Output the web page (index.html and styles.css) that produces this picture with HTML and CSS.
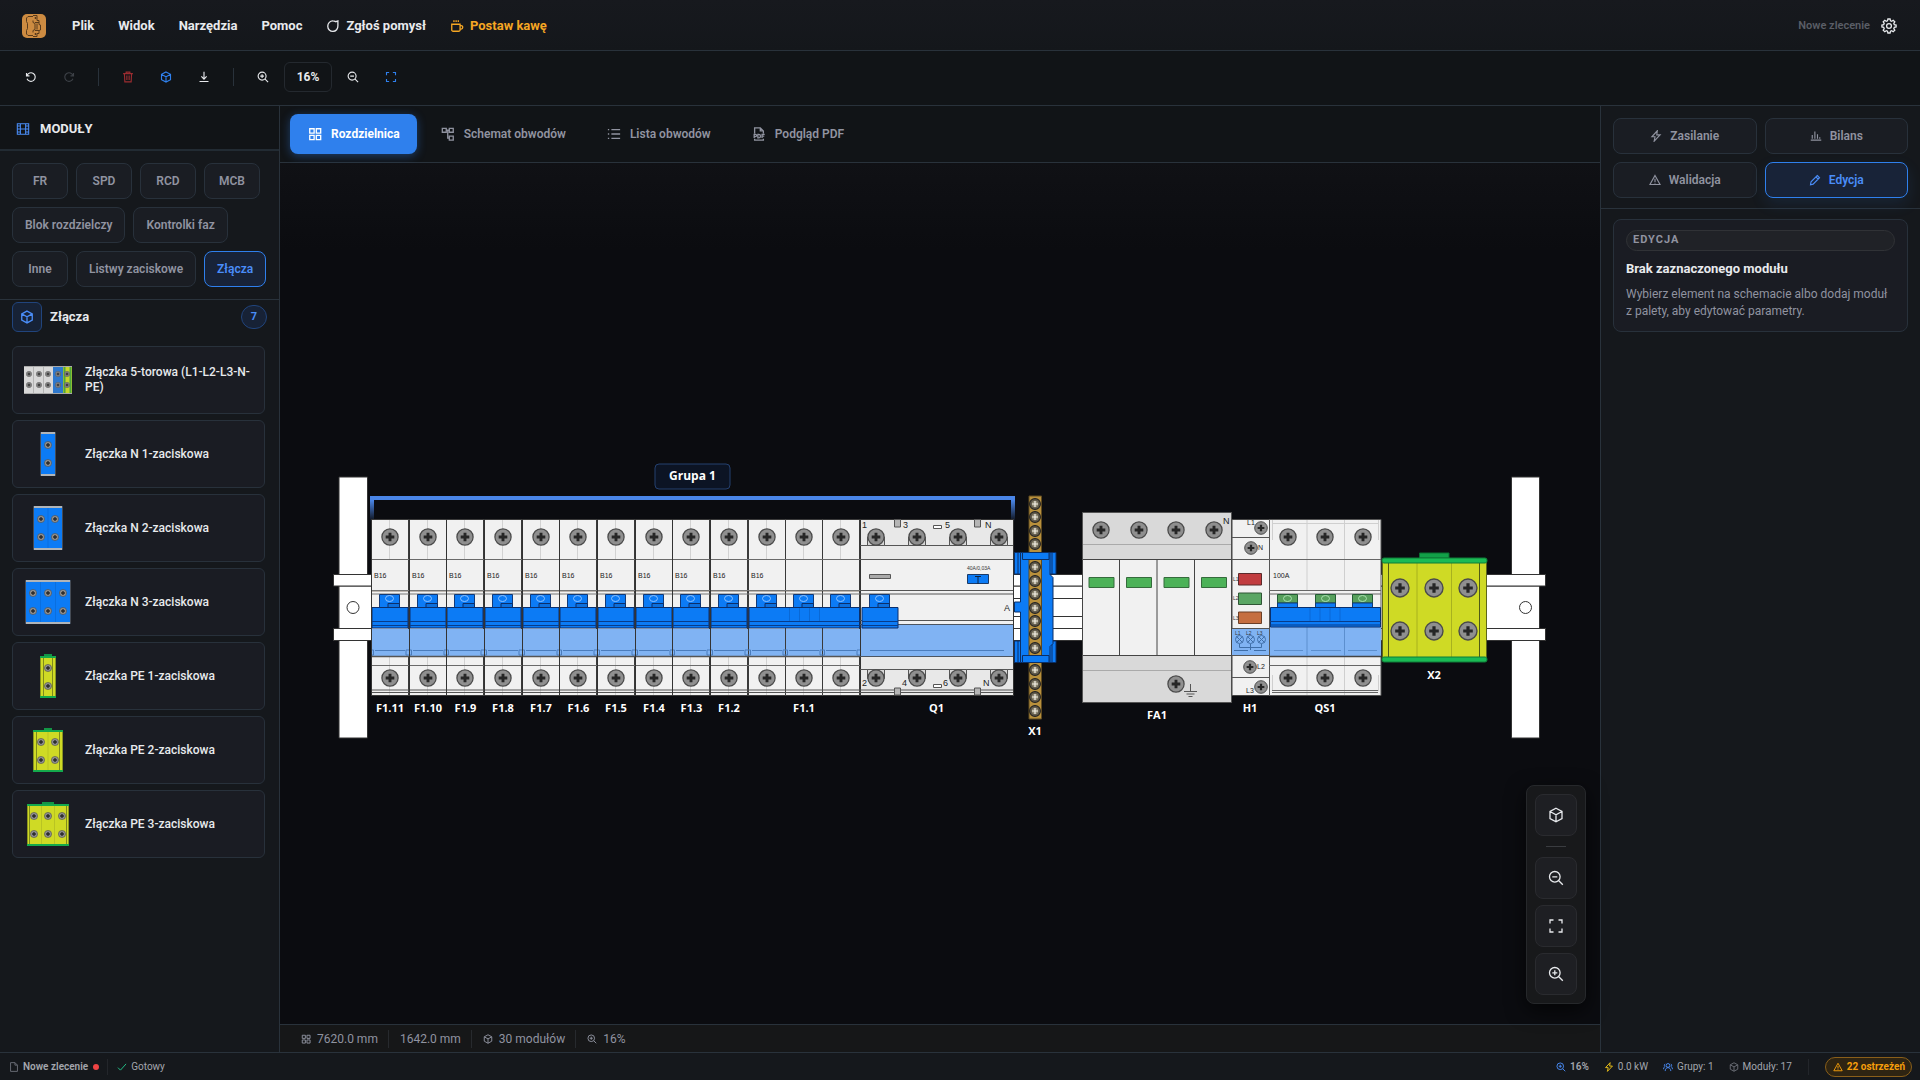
FILE: index.html
```html
<!DOCTYPE html>
<html lang="pl">
<head>
<meta charset="utf-8">
<meta name="viewport" content="width=device-width, initial-scale=1">
<title>Rozdzielnica – Nowe zlecenie</title>
<link rel="stylesheet" href="styles.css">
</head>
<body>
<svg class="defs" aria-hidden="true">
  <defs>
    <symbol id="i-bubble" viewBox="0 0 16 16"><path d="M13.6 2.2v5.6A5.8 6 0 1 1 8 2.2c1.200 0 2.300.5 3.200.9z"/></symbol>
    <symbol id="i-coffee" viewBox="0 0 16 16"><path d="M2 6h9.500v6.500a1.500 1.500 0 0 1-1.500 1.500H3.500A1.500 1.500 0 0 1 2 12.500zM11.500 7.500h1.300a1.700 1.700 0 0 1 1.700 1.700v.6a1.700 1.700 0 0 1-1.700 1.700h-1.300M4.500 1.500v2M7 1.500v2M9.500 1.500v2"/></symbol>
    <symbol id="i-undo" viewBox="0 0 16 16"><path d="M2 2.500v4h4M2.500 6.300A5.700 5.700 0 1 1 2.700 10.300"/></symbol>
    <symbol id="i-redo" viewBox="0 0 16 16"><path d="M14 2.500v4h-4M13.500 6.300A5.700 5.700 0 1 0 13.300 10.300"/></symbol>
    <symbol id="i-trash" viewBox="0 0 16 16"><path d="M1.500 3.500h13M5.500 3.500v-2h5v2M3.200 3.500l.6 11h8.400l.6-11M6.500 6v6M9.500 6v6"/></symbol>
    <symbol id="i-cube" viewBox="0 0 16 16"><path d="M8 1.200l6 3.300v7L8 14.800l-6-3.300v-7zM2 4.500l6 3.300 6-3.300M8 7.800v7"/></symbol>
    <symbol id="i-down" viewBox="0 0 16 16"><path d="M8 1v9.500M4.500 7.300L8 10.800l3.500-3.500M2 14h12"/></symbol>
    <symbol id="i-zin" viewBox="0 0 16 16"><circle cx="6.800" cy="6.800" r="5.300"/><path d="M10.800 10.800l4 4M6.800 4.300v5M4.300 6.800h5"/></symbol>
    <symbol id="i-zout" viewBox="0 0 16 16"><circle cx="6.800" cy="6.800" r="5.300"/><path d="M10.800 10.800l4 4M4.300 6.800h5"/></symbol>
    <symbol id="i-fit" viewBox="0 0 16 16"><path d="M2 5.500V2h3.500M10.500 2H14v3.500M14 10.500V14h-3.500M5.500 14H2v-3.500"/></symbol>
    <symbol id="i-table" viewBox="0 0 16 16"><path d="M1.500 2h13v12h-13zM1.500 8h13M5 2v12M11 2v12M1.500 4.500H5M11 4.500h3.500M1.500 11.500H5M11 11.500h3.500"/></symbol>
    <symbol id="i-grid" viewBox="0 0 16 16"><path d="M2 2h5v5H2zM9.500 2h5v5h-5zM2 9.500h5v5H2zM9.500 9.500h5v5h-5z"/></symbol>
    <symbol id="i-flow" viewBox="0 0 16 16"><path d="M1.500 1.500h4.500V6H1.500zM9.500 1.500H14V6H9.500zM9.500 10.500H14V15H9.500zM6 3.700h3.500M7.700 3.700v9h1.800"/></symbol>
    <symbol id="i-list" viewBox="0 0 16 16"><path d="M1 3h1.500M1 8h1.500M1 13h1.500M5 3h10M5 8h10M5 13h10"/></symbol>
    <symbol id="i-pdf" viewBox="0 0 16 16"><path d="M3 7.500V1h6.500L13 4.500v3M9.500 1v3.500H13M3 13.500V15h10v-1.500M2.500 12.500v-4H4a1.200 1.200 0 0 1 0 2.400H2.500M6.700 8.500v4h1a2 2 0 0 0 0-4zM14.500 8.500H11.500v4M11.500 10.500h2.500"/></symbol>
    <symbol id="i-bolt" viewBox="0 0 16 16"><path d="M9.800 1L2.500 9h4.200L5.500 15l8-8.500H9z"/></symbol>
    <symbol id="i-bars" viewBox="0 0 16 16"><path d="M1 13.500h14M3 11.500v-5M6.500 11.500V2M10 11.500v-6M13 11.500v-2"/></symbol>
    <symbol id="i-warn" viewBox="0 0 16 16"><path d="M8 2l6.700 12H1.300zM8 6.300v4.200M8 11.700v1"/></symbol>
    <symbol id="i-pen" viewBox="0 0 16 16"><path d="M11 2l3 3-8.500 8.500L2 14.300l.7-3.800zM9.200 3.800l3 3"/></symbol>
    <symbol id="i-gear" viewBox="0 0 16 16"><circle cx="8" cy="8" r="2.400"/><path d="M6.900 1h2.200l.4 1.800 1.200.5 1.500-1 1.600 1.600-1 1.500.5 1.200 1.800.4v2l-1.800.4-.5 1.200 1 1.500-1.600 1.600-1.500-1-1.200.5L9.100 15H6.900l-.4-1.800-1.200-.5-1.500 1-1.600-1.600 1-1.500-.5-1.200L.9 9V7l1.800-.4.5-1.200-1-1.500 1.600-1.600 1.500 1 1.200-.5z"/></symbol>
    <symbol id="i-file" viewBox="0 0 16 16"><path d="M2.500 1h7l4 4v10h-11zM9.500 1v4h4"/></symbol>
    <symbol id="i-check" viewBox="0 0 16 16"><path d="M1.500 9l4 4L14.500 3"/></symbol>
    <symbol id="i-group" viewBox="0 0 16 16"><circle cx="8" cy="5.500" r="3"/><path d="M3.500 14.500c0-3.500 2-5.500 4.500-5.500s4.500 2 4.500 5.500M3.500 3C1.800 4 1.800 6.500 3 7.500 1.500 8.500.8 10 .8 11.500M12.500 3c1.700 1 1.700 3.500.5 4.500 1.500 1 2.200 2.500 2.200 4"/></symbol>

    <symbol id="screw" viewBox="-10 -10 20 20"><circle r="9" fill="#8f8f8f" stroke="#4b4b4b" stroke-width="1.400"/><path d="M0-4.800V4.800M-4.800 0H4.800" stroke="#262626" stroke-width="3.200"/></symbol>
    <symbol id="brass-screw" viewBox="-10 -10 20 20"><circle r="9" fill="#6b6353" stroke="#222" stroke-width="1.800"/><circle r="6.500" fill="#8f8874" stroke="#3a362c"/><path d="M0-5V5M-5 0H5" stroke="#f4f1e6" stroke-width="2"/></symbol>

    <g id="toggle"><path d="M8.500 75.500h20V89h-20z" fill="#0c7bf5" stroke="#123a78"/><ellipse cx="18.500" cy="79.500" rx="4" ry="3" fill="none" stroke="#8fc2ff"/><path d="M17 84.500h11.500V89H17z" fill="#0c6fdd" stroke="#0b2f6b"/></g>
    <g id="pole">
      <path d="M.5.500h37v176H.5z" fill="#f1f1f1" stroke="#3a3a3a"/>
      <path d="M18.500 1v39M18.500 138v38" stroke="#d2d2d2"/>
      <path d="M0 40.500h38M0 146.500h38" stroke="#6a6a6a"/>
      <path d="M0 71.500h38M0 75h38" stroke="#777"/>
      <path d="M1 72.500h36" stroke="#bcb6b0"/>
      <path d="M1 110h37v27H1z" fill="#80b3f3"/>
      <path d="M4 131.500h30M0 131h2.500v5H0M38 131h-3v5h3" stroke="#4b7dbd" fill="none"/>
      <path d="M0 137.500h38" stroke="#555" stroke-width="1.500"/>
      <path d="M0 171h38M0 173.500h38" stroke="#555"/>
      <use href="#toggle"/>
      <use href="#screw" x="10" y="9" width="18" height="18"/>
      <use href="#screw" x="10" y="150" width="18" height="18"/>
    </g>
    <g id="handle"><path d="M1 88.500h36V109H1z" fill="#0c7bf5" stroke="#0a2f6c"/><path d="M1 102.500h36M1 106.500h36" stroke="#083c8a"/></g>
    <g id="mcb"><use href="#pole"/><use href="#handle"/><path d="M.5 0v177" stroke="#333"/><text x="3" y="59" class="tiny-text">B16</text></g>
    <g id="green-toggle"><path d="M8.500 75.500h20V84h-20z" fill="#57a05c" stroke="#245c35"/><path d="M8.500 84h20v5h-20z" fill="#0c7bf5" stroke="#123a78"/><ellipse cx="18.500" cy="79.500" rx="4" ry="3" fill="none" stroke="#a8e0b0"/></g>

    <linearGradient id="fade" x1="0" y1="0" x2="0" y2="1"><stop offset="0" stop-color="#4a86e8"/><stop offset="1" stop-color="#4a86e8" stop-opacity="0"/></linearGradient>
  </defs>
</svg>

<div class="app">
  <header class="topbar">
    <svg class="logo" viewBox="0 0 24 24" role="img" aria-label="Logo"><rect width="24" height="24" rx="5" fill="#cd8b41"/><path d="M11 2.500H6L4.500 4v3.500l1 2v5l-1 2V20L6 21.500h5M11 1.500h4v5h2v4l1.500.5v5l-1.500.5v3h-2v3h-4M13 3.500h1v1h-1zM13 19.500h1v1h-1zM11 6.500v2l2 1v6l-2 1v2M15 9.500v6M13 8.500h4M13 16.500h4" fill="none" stroke="#593b1c"/></svg>
    <nav class="menu" aria-label="Menu główne">
      <button type="button">Plik</button>
      <button type="button">Widok</button>
      <button type="button">Narzędzia</button>
      <button type="button">Pomoc</button>
      <button type="button"><svg class="icon s14"><use href="#i-bubble"/></svg>Zgłoś pomysł</button>
      <button type="button" class="coffee"><svg class="icon s14"><use href="#i-coffee"/></svg>Postaw kawę</button>
    </nav>
    <span class="doc-name">Nowe zlecenie</span>
    <button type="button" class="gear" aria-label="Ustawienia"><svg class="icon s16"><use href="#i-gear"/></svg></button>
  </header>

  <div class="toolbar" role="toolbar" aria-label="Narzędzia">
    <button type="button" aria-label="Cofnij"><svg class="icon s12"><use href="#i-undo"/></svg></button>
    <button type="button" aria-label="Ponów" disabled><svg class="icon s12"><use href="#i-redo"/></svg></button>
    <span class="sep"></span>
    <button type="button" class="danger" aria-label="Usuń"><svg class="icon s12"><use href="#i-trash"/></svg></button>
    <button type="button" class="accent" aria-label="Widok 3D"><svg class="icon s12"><use href="#i-cube"/></svg></button>
    <button type="button" aria-label="Pobierz"><svg class="icon s12"><use href="#i-down"/></svg></button>
    <span class="sep"></span>
    <button type="button" aria-label="Powiększ"><svg class="icon s12"><use href="#i-zin"/></svg></button>
    <button type="button" class="zoom-value">16%</button>
    <button type="button" aria-label="Pomniejsz"><svg class="icon s12"><use href="#i-zout"/></svg></button>
    <button type="button" class="accent" aria-label="Dopasuj"><svg class="icon s12"><use href="#i-fit"/></svg></button>
  </div>

  <main class="workspace">
    <aside class="palette">
      <h2 class="palette-title"><svg class="icon s14"><use href="#i-table"/></svg>MODUŁY</h2>
      <div class="categories">
        <button type="button">FR</button>
        <button type="button">SPD</button>
        <button type="button">RCD</button>
        <button type="button">MCB</button>
        <button type="button">Blok rozdzielczy</button>
        <button type="button">Kontrolki faz</button>
        <button type="button">Inne</button>
        <button type="button">Listwy zaciskowe</button>
        <button type="button" class="active">Złącza</button>
      </div>
      <div class="group-head">
        <span class="group-icon"><svg class="icon s14"><use href="#i-cube"/></svg></span>
        <h3>Złącza</h3>
        <span class="count">7</span>
      </div>
      <ul class="modules">
        <li><button type="button">
          <svg class="thumb" viewBox="0 0 48 44"><path d="M0 8h48v28H0z" fill="#d8d8d8"/><path d="M29 9h10v26H29z" fill="#2f78cc"/><path d="M39 9h9v26h-9z" fill="#c6d42a"/><path d="M40.500 9v26M46.500 9v26" stroke="#4fa63c" stroke-width="2"/><path d="M9.500 9v26M19.500 9v26" stroke="#b4b4b4"/><path d="M0 8.500h48M0 35.500h48" stroke="#a9a9a9"/><g><use href="#screw" x="2" y="13" width="6" height="6"/><use href="#screw" x="12" y="13" width="6" height="6"/><use href="#screw" x="21" y="13" width="6" height="6"/><use href="#screw" x="31" y="13" width="6" height="6"/><use href="#screw" x="40" y="13" width="6" height="6"/><use href="#screw" x="2" y="24" width="6" height="6"/><use href="#screw" x="12" y="24" width="6" height="6"/><use href="#screw" x="21" y="24" width="6" height="6"/><use href="#screw" x="31" y="24" width="6" height="6"/><use href="#screw" x="40" y="24" width="6" height="6"/></g></svg>
          <span>Złączka 5-torowa (L1-L2-L3-N-PE)</span></button></li>
        <li><button type="button">
          <svg class="thumb" viewBox="0 0 48 44"><path d="M16.500.500h15v43h-15z" fill="#0c7bf5" stroke="#454b55"/><path d="M17 1h14M17 43h14" stroke="#b0b4b8" stroke-width="2"/><use href="#screw" x="20" y="9" width="8" height="8"/><use href="#screw" x="20" y="27" width="8" height="8"/></svg>
          <span>Złączka N 1-zaciskowa</span></button></li>
        <li><button type="button">
          <svg class="thumb" viewBox="0 0 48 44"><path d="M9.500.500h29v43h-29z" fill="#0c7bf5" stroke="#454b55"/><path d="M10 1h28M10 43h28" stroke="#b0b4b8" stroke-width="2"/><path d="M24 2v40" stroke="#0a6fdf"/><use href="#screw" x="13" y="9" width="8" height="8"/><use href="#screw" x="27" y="9" width="8" height="8"/><use href="#screw" x="13" y="27" width="8" height="8"/><use href="#screw" x="27" y="27" width="8" height="8"/></svg>
          <span>Złączka N 2-zaciskowa</span></button></li>
        <li><button type="button">
          <svg class="thumb" viewBox="0 0 48 44"><path d="M1.500.500h45v43h-45z" fill="#0c7bf5" stroke="#454b55"/><path d="M2 1h44M2 43h44" stroke="#b0b4b8" stroke-width="2"/><path d="M16.500 2v40M31.500 2v40" stroke="#0a6fdf"/><use href="#screw" x="5" y="9" width="8" height="8"/><use href="#screw" x="20" y="9" width="8" height="8"/><use href="#screw" x="35" y="9" width="8" height="8"/><use href="#screw" x="5" y="27" width="8" height="8"/><use href="#screw" x="20" y="27" width="8" height="8"/><use href="#screw" x="35" y="27" width="8" height="8"/></svg>
          <span>Złączka N 3-zaciskowa</span></button></li>
        <li><button type="button">
          <svg class="thumb" viewBox="0 0 48 44"><path d="M20 0h8v3h-8z" fill="#129545"/><path d="M16.500 3h15v40h-15z" fill="#cfda25" stroke="#8a9420"/><path d="M19.500 4v38M28.500 4v38" stroke="#7f8a1c"/><path d="M16 3h16M16 43h16" stroke="#14a94c" stroke-width="2"/><use href="#screw" x="20" y="10" width="8" height="8"/><use href="#screw" x="20" y="28" width="8" height="8"/></svg>
          <span>Złączka PE 1-zaciskowa</span></button></li>
        <li><button type="button">
          <svg class="thumb" viewBox="0 0 48 44"><path d="M20 0h8v3h-8z" fill="#129545"/><path d="M9.500 3h29v40h-29z" fill="#cfda25" stroke="#8a9420"/><path d="M12.500 4v38M35.500 4v38" stroke="#7f8a1c"/><path d="M24 4v38" stroke="#b9c423"/><path d="M9 3h30M9 43h30" stroke="#14a94c" stroke-width="2"/><use href="#screw" x="13" y="10" width="8" height="8"/><use href="#screw" x="27" y="10" width="8" height="8"/><use href="#screw" x="13" y="28" width="8" height="8"/><use href="#screw" x="27" y="28" width="8" height="8"/></svg>
          <span>Złączka PE 2-zaciskowa</span></button></li>
        <li><button type="button">
          <svg class="thumb" viewBox="0 0 48 44"><path d="M18 0h12v3H18z" fill="#129545"/><path d="M3.500 3h41v40h-41z" fill="#cfda25" stroke="#8a9420"/><path d="M5.500 4v38M42.500 4v38" stroke="#7f8a1c"/><path d="M17.500 4v38M30.500 4v38" stroke="#b9c423"/><path d="M3 3h42M3 43h42" stroke="#14a94c" stroke-width="2"/><use href="#screw" x="6" y="10" width="8" height="8"/><use href="#screw" x="20" y="10" width="8" height="8"/><use href="#screw" x="34" y="10" width="8" height="8"/><use href="#screw" x="6" y="28" width="8" height="8"/><use href="#screw" x="20" y="28" width="8" height="8"/><use href="#screw" x="34" y="28" width="8" height="8"/></svg>
          <span>Złączka PE 3-zaciskowa</span></button></li>
      </ul>
    </aside>

    <section class="center">
      <div class="tabs" role="tablist">
        <button type="button" role="tab" aria-selected="true" class="active"><svg class="icon s14"><use href="#i-grid"/></svg>Rozdzielnica</button>
        <button type="button" role="tab"><svg class="icon s14"><use href="#i-flow"/></svg>Schemat obwodów</button>
        <button type="button" role="tab"><svg class="icon s14"><use href="#i-list"/></svg>Lista obwodów</button>
        <button type="button" role="tab"><svg class="icon s14"><use href="#i-pdf"/></svg>Podgląd PDF</button>
      </div>

      <div class="canvas">
        <svg class="drawing" viewBox="280 163 1320 861" role="img" aria-label="Rozdzielnica">
          <!-- DIN rail and side posts -->
          <g fill="#fff" stroke="#333">
            <path d="M339 477h28.500v261H339zM1511.500 477h28v261h-28z"/>
            <path d="M339 586h1200.500v42.500H339z"/>
            <path d="M333.500 574.500h1212V586h-1212zM333.500 628.500h1212V640.500h-1212z"/>
            <path d="M1014 598.500h70M1014 616.500h70"/>
            <circle cx="353" cy="607.500" r="6"/><circle cx="1525.500" cy="607.500" r="6"/>
          </g>

          <!-- Group bracket -->
          <path d="M370 496h645v4H370z" fill="#4a86e8"/>
          <path d="M370 500h4v22h-4zM1011 500h4v22h-4z" fill="url(#fade)"/>
          <rect x="655" y="464" width="75" height="25" rx="4" fill="#0c1424" stroke="#24406f"/>
          <text x="692.500" y="480" class="group-text">Grupa 1</text>

          <!-- F1.11 … F1.2 -->
          <use href="#mcb" x="371" y="519"/><use href="#mcb" x="409" y="519"/><use href="#mcb" x="446" y="519"/><use href="#mcb" x="484" y="519"/><use href="#mcb" x="522" y="519"/><use href="#mcb" x="559" y="519"/><use href="#mcb" x="597" y="519"/><use href="#mcb" x="635" y="519"/><use href="#mcb" x="672" y="519"/><use href="#mcb" x="710" y="519"/>

          <!-- F1.1 -->
          <use href="#pole" x="748" y="519"/><use href="#pole" x="785" y="519"/><use href="#pole" x="822" y="519"/>
          <text x="751" y="578" class="tiny-text">B16</text>
          <path d="M749 607.500h110.500V628H749z" fill="#0c7bf5" stroke="#0a2f6c"/>
          <path d="M749 621.500h110.500M749 625.500h110.500" stroke="#083c8a"/>
          <path d="M789.500 608v13M799.500 608v13M809.500 608v13M819.500 608v13" stroke="#0a69d6"/>

          <!-- Q1 -->
          <g transform="translate(860 519)">
            <path d="M.5.500h153v176H.5z" fill="#f1f1f1" stroke="#333"/>
            <path d="M1 1h152v39.500H1zM1 138h152v38H1z" fill="#e8e8e8"/>
            <path d="M0 26.500h153M0 40.500h153M0 71.500h153M0 75h153M0 101.500h153M0 150.500h153M0 171h153M0 173.500h153" stroke="#555"/>
            <path d="M1 105h152v32H1z" fill="#80b3f3"/>
            <path d="M0 105.500h153M0 137.500h153" stroke="#4c5561"/><path d="M10 131.500h134" stroke="#4b7dbd"/>
            <g fill="#d6d6d6" stroke="#555"><path d="M7.500 18h17v8.500h-17zM48.500 18h17v8.500h-17zM89.500 18h17v8.500h-17zM130.500 18h17v8.500h-17zM7.500 150.500h17v9h-17zM48.500 150.500h17v9h-17zM89.500 150.500h17v9h-17zM130.500 150.500h17v9h-17z"/><path d="M34.500.500h6V8h-6zM114.500.500h6V8h-6zM34.500 169h6v7h-6zM114.500 169h6v7h-6z" fill="#b5b5b5"/><path d="M73.500 6.500h8v3h-8zM73.500 165.500h8v3h-8z" fill="#fff"/><path d="M9.500 55.500h21v4h-21z" fill="#aaa"/></g>
            <use href="#screw" x="7" y="9" width="18" height="18"/><use href="#screw" x="48" y="9" width="18" height="18"/><use href="#screw" x="89" y="9" width="18" height="18"/><use href="#screw" x="130" y="9" width="18" height="18"/>
            <use href="#screw" x="7" y="150" width="18" height="18"/><use href="#screw" x="48" y="150" width="18" height="18"/><use href="#screw" x="89" y="150" width="18" height="18"/><use href="#screw" x="130" y="150" width="18" height="18"/>
            <g class="mark-text"><text x="2" y="9">1</text><text x="43" y="9">3</text><text x="85" y="9">5</text><text x="125" y="9">N</text><text x="2" y="167">2</text><text x="42" y="167">4</text><text x="83" y="167">6</text><text x="123" y="167">N</text><text x="144" y="92">A</text></g>
            <text x="107" y="51" class="micro-text">40A/0,03A</text>
            <path d="M107.500 55.500h21v9h-21z" fill="#0c7bf5" stroke="#1b3a66"/><path d="M115 57.500h6M118 57.500V65" stroke="#10243f"/>
            <use href="#toggle" x="1"/><use href="#handle" x="1"/>
          </g>

          <!-- X1 -->
          <g fill="#0c7bf5" stroke="#0b2f66">
            <path d="M1014.500 552.500h41.500V574h-41.500zM1014.500 641h41.500v21.500h-41.500z"/>
            <path d="M1018 552v22M1052 552v22M1018 641v21M1052 641v21"/>
            <path d="M1020.500 552.500h29.500v22l3 3v66l-3 3v16h-29.500v-50.500h-6v-10h6z"/>
          </g>
          <path d="M1029 496h12.500v223H1029z" fill="#b8903c" stroke="#5e4a20"/>
          <path d="M1022.500 552.500h26.500v7h-26.500zM1022.500 655.500h26.500v7h-26.500z" fill="#0c7bf5" stroke="#0b2f66"/>
          <g>
            <use href="#brass-screw" x="1029" y="498" width="12" height="12"/><use href="#brass-screw" x="1029" y="511" width="12" height="12"/><use href="#brass-screw" x="1029" y="525" width="12" height="12"/><use href="#brass-screw" x="1029" y="538" width="12" height="12"/>
            <use href="#brass-screw" x="1029" y="561" width="12" height="12"/><use href="#brass-screw" x="1029" y="575" width="12" height="12"/><use href="#brass-screw" x="1029" y="588" width="12" height="12"/><use href="#brass-screw" x="1029" y="602" width="12" height="12"/><use href="#brass-screw" x="1029" y="615" width="12" height="12"/><use href="#brass-screw" x="1029" y="628" width="12" height="12"/><use href="#brass-screw" x="1029" y="642" width="12" height="12"/>
            <use href="#brass-screw" x="1029" y="664" width="12" height="12"/><use href="#brass-screw" x="1029" y="678" width="12" height="12"/><use href="#brass-screw" x="1029" y="691" width="12" height="12"/><use href="#brass-screw" x="1029" y="705" width="12" height="12"/>
          </g>

          <!-- FA1 -->
          <path d="M1082.500 512.500h149v190h-149z" fill="#d9d9d9" stroke="#555"/>
          <path d="M1083 544.500h148M1083 670.500h148" stroke="#aaa"/>
          <path d="M1082.500 559.500h149v96h-149zM1119.500 560v95M1157 560v95M1194.500 560v95" fill="#f1f1f1" stroke="#444"/>
          <g fill="#4cb258" stroke="#356b3c"><path d="M1089 577.500h25v10h-25zM1126.500 577.500h25v10h-25zM1164 577.500h25v10h-25zM1201.500 577.500h25v10h-25z"/></g>
          <use href="#screw" x="1092" y="521" width="18" height="18"/><use href="#screw" x="1130" y="521" width="18" height="18"/><use href="#screw" x="1167" y="521" width="18" height="18"/><use href="#screw" x="1205" y="521" width="18" height="18"/><use href="#screw" x="1167" y="675" width="18" height="18"/>
          <text x="1223" y="524" class="mark-text">N</text>
          <path d="M1190.500 684v7.500M1184 691.500h13M1186.500 694h8M1188.500 696.500h4" stroke="#555"/>

          <!-- H1 -->
          <path d="M1232 519.500h37.500v176H1232z" fill="#f1f1f1" stroke="#444"/>
          <path d="M1232 628.500h37.500V656H1232z" fill="#80b3f3"/>
          <path d="M1232 537.500h37M1232 559.500h37M1232 628.500h37M1232 655.500h37M1232 677.500h37" stroke="#555"/>
          <path d="M1238.500 573.500h23V585h-23z" fill="#c13c3f" stroke="#5b2a2b"/><path d="M1238.500 593h23v11.500h-23z" fill="#5aa664" stroke="#2f5535"/><path d="M1238.500 612h23v11.500h-23z" fill="#c56e40" stroke="#6b3f27"/>
          <g class="tiny-text"><text x="1247" y="525">L1</text><text x="1258" y="550">N</text><text x="1257" y="669">L2</text><text x="1246" y="693">L3</text></g>
          <use href="#screw" x="1254" y="521" width="14" height="14"/><use href="#screw" x="1244" y="541" width="14" height="14"/><use href="#screw" x="1243" y="660" width="14" height="14"/><use href="#screw" x="1254" y="680" width="14" height="14"/>
          <g class="micro-text"><text x="1233" y="581">L1</text><text x="1233" y="600">L2</text><text x="1233" y="620">L3</text><text x="1235" y="635">L1</text><text x="1246" y="635">L2</text><text x="1257" y="635">L3</text></g>
          <path d="M1236.500 636.500l6 6m0-6l-6 6M1247.500 636.500l6 6m0-6l-6 6M1258.500 636.500l6 6m0-6l-6 6M1239.500 644v3.500h22V644M1250.500 644v6M1234 650.500h14M1254 650.500h12" stroke="#3f6ea8" fill="none"/>
          <g fill="none" stroke="#3f6ea8"><circle cx="1239.500" cy="639.500" r="4"/><circle cx="1250.500" cy="639.500" r="4"/><circle cx="1261.500" cy="639.500" r="4"/></g>

          <!-- QS1 -->
          <g transform="translate(1269 519)">
            <path d="M.5.500H112v176H.5z" fill="#f1f1f1" stroke="#555"/>
            <path d="M38 1v70M75.500 1v70M38 138v38M75.500 138v38M3.500 1v20M3.500 4.500H109M109.500 1v20M3.500 156v16M109.500 156v16" stroke="#cfcfcf"/>
            <path d="M0 40.500h112M0 71.500h112M0 75h112M0 146.500h112M3 171.500h106M3 173.500h106" stroke="#666"/>
            <path d="M1 108h111v29H1z" fill="#80b3f3"/><path d="M0 137.500h112" stroke="#444" stroke-width="1.500"/>
            <path d="M38 108v29M75.500 108v29M5 131.500h29M42 131.500h30M79 131.500h29" stroke="#5c8fce"/>
            <use href="#green-toggle"/><use href="#green-toggle" x="38"/><use href="#green-toggle" x="75"/>
            <path d="M1.500 88.500h110V108H1.500z" fill="#0c7bf5" stroke="#0a2f6c"/><path d="M1 102.500h111M1 106h111" stroke="#083c8a"/><path d="M41 89v13M51 89v13M61 89v13M71 89v13" stroke="#0a69d6"/>
            <use href="#screw" x="10" y="9" width="18" height="18"/><use href="#screw" x="47" y="9" width="18" height="18"/><use href="#screw" x="85" y="9" width="18" height="18"/>
            <use href="#screw" x="10" y="150" width="18" height="18"/><use href="#screw" x="47" y="150" width="18" height="18"/><use href="#screw" x="85" y="150" width="18" height="18"/>
            <text x="4" y="59" class="tiny-text">100A</text>
          </g>

          <!-- X2 -->
          <path d="M1419.500 553h29.500v5h-29.500z" fill="#12a048" stroke="#0a6e30"/>
          <path d="M1382.500 560h104v100h-104z" fill="#cfda25" stroke="#5d661a"/>
          <path d="M1388.500 563v94M1479.500 563v94" stroke="#4f5a16"/><path d="M1417 563v94M1451.500 563v94" stroke="#a8b21f"/>
          <rect x="1382" y="558" width="105" height="5" rx="2" fill="#1bbb55" stroke="#0f7d38"/><rect x="1382" y="657" width="105" height="5" rx="2" fill="#1bbb55" stroke="#0f7d38"/>
          <use href="#screw" x="1390" y="578" width="20" height="20"/><use href="#screw" x="1424" y="578" width="20" height="20"/><use href="#screw" x="1458" y="578" width="20" height="20"/><use href="#screw" x="1390" y="621" width="20" height="20"/><use href="#screw" x="1424" y="621" width="20" height="20"/><use href="#screw" x="1458" y="621" width="20" height="20"/>

          <g class="label-text">
            <text x="390" y="712">F1.11</text><text x="428" y="712">F1.10</text><text x="465.500" y="712">F1.9</text><text x="503" y="712">F1.8</text><text x="541" y="712">F1.7</text><text x="578.500" y="712">F1.6</text><text x="616" y="712">F1.5</text><text x="654" y="712">F1.4</text><text x="691.500" y="712">F1.3</text><text x="729" y="712">F1.2</text><text x="804" y="712">F1.1</text><text x="936.500" y="712">Q1</text><text x="1035" y="735">X1</text><text x="1157" y="719">FA1</text><text x="1250" y="712">H1</text><text x="1325" y="712">QS1</text><text x="1434" y="679">X2</text>
          </g>
        </svg>

        <div class="float-tools">
          <button type="button" aria-label="Widok 3D"><svg class="icon s16"><use href="#i-cube"/></svg></button>
          <hr>
          <button type="button" aria-label="Pomniejsz"><svg class="icon s16"><use href="#i-zout"/></svg></button>
          <button type="button" aria-label="Dopasuj"><svg class="icon s16"><use href="#i-fit"/></svg></button>
          <button type="button" aria-label="Powiększ"><svg class="icon s16"><use href="#i-zin"/></svg></button>
        </div>
      </div>

      <div class="infobar">
        <span><svg class="icon s10"><use href="#i-grid"/></svg>7620.0 mm</span>
        <span>1642.0 mm</span>
        <span><svg class="icon s10"><use href="#i-cube"/></svg>30 modułów</span>
        <span><svg class="icon s10"><use href="#i-zin"/></svg>16%</span>
      </div>
    </section>

    <aside class="inspector">
      <div class="inspector-tabs">
        <button type="button"><svg class="icon s12"><use href="#i-bolt"/></svg>Zasilanie</button>
        <button type="button"><svg class="icon s12"><use href="#i-bars"/></svg>Bilans</button>
        <button type="button"><svg class="icon s12"><use href="#i-warn"/></svg>Walidacja</button>
        <button type="button" class="active"><svg class="icon s12"><use href="#i-pen"/></svg>Edycja</button>
      </div>
      <div class="empty-card">
        <span class="pill">EDYCJA</span>
        <h3>Brak zaznaczonego modułu</h3>
        <p>Wybierz element na schemacie albo dodaj moduł z palety, aby edytować parametry.</p>
      </div>
    </aside>
  </main>

  <footer class="statusbar">
    <span class="file"><svg class="icon s10 dim"><use href="#i-file"/></svg>Nowe zlecenie<i class="dot"></i></span>
    <span class="ready"><svg class="icon s10 ok"><use href="#i-check"/></svg>Gotowy</span>
    <span class="push strong"><svg class="icon s10 blue"><use href="#i-zin"/></svg>16%</span>
    <span><svg class="icon s10 yellow"><use href="#i-bolt"/></svg>0.0 kW</span>
    <span><svg class="icon s10 blue"><use href="#i-group"/></svg>Grupy: 1</span>
    <span class="last"><svg class="icon s10 dim"><use href="#i-cube"/></svg>Moduły: 17</span>
    <button type="button" class="warnings"><svg class="icon s10"><use href="#i-warn"/></svg>22 ostrzeżeń</button>
  </footer>
</div>
</body>
</html>
```
FILE: styles.css
```css
:root {
  --line: #29323b;
  --panel: #15181c;
  --text: #e8eaed;
  --muted: #9093a0;
  --blue: #2f80ed;
  --blue-text: #4a8df8;
}
* { box-sizing: border-box; }
body {
  margin: 0;
  background: #111417;
  color: var(--text);
  font-family: Roboto, "Liberation Sans", sans-serif;
  font-size: 12px;
  line-height: 16px;
}
button { font: inherit; color: inherit; background: none; border: 0; padding: 0; margin: 0; cursor: pointer; }
h2, h3, p, ul { margin: 0; padding: 0; list-style: none; }
.defs { position: absolute; width: 0; height: 0; }
.icon { fill: none; stroke: currentColor; stroke-width: 1.500; flex: none; display: block; }
.s10 { width: 10px; height: 10px; }
.s12 { width: 12px; height: 12px; }
.s14 { width: 14px; height: 14px; }
.s16 { width: 16px; height: 16px; stroke-width: 1.300; }

.app { display: flex; flex-direction: column; height: 100vh; }

.topbar {
  display: flex; align-items: center; flex: none; height: 51px; padding: 2px 23px 0 22px;
  background: linear-gradient(#17191e, #14171b);
  border-bottom: 1px solid var(--line);
}
.logo { width: 24px; height: 24px; margin-right: 14px; }
.menu { display: flex; flex: 1; font-size: 13px; font-weight: 700; }
.menu button { display: flex; align-items: center; gap: 6px; height: 32px; padding: 0 12px; }
.menu .coffee { color: #f5a623; }
.doc-name { color: #5a5e66; font-size: 11px; font-weight: 600; margin-right: 11px; }

.toolbar {
  display: flex; align-items: center; gap: 6px; flex: none; height: 55px; padding: 0 15px 2px;
  background: #111417;
  border-bottom: 1px solid var(--line);
}
.toolbar button { display: flex; align-items: center; justify-content: center; width: 32px; height: 32px; }
.toolbar button:disabled { color: #3d4147; }
.toolbar .danger { color: #9c2c30; }
.toolbar .accent { color: var(--blue); }
.toolbar .sep { width: 1px; height: 18px; margin: 0 7px; background: var(--line); }
.toolbar .zoom-value { width: 48px; height: 30px; margin: 0 -1px; border: 1px solid #24292f; border-radius: 6px; font-size: 12px; font-weight: 700; }

.workspace { display: flex; flex: 1; min-height: 0; }

.palette { width: 280px; flex: none; background: var(--panel); border-right: 1px solid var(--line); overflow: hidden; }
.palette-title {
  display: flex; align-items: center; gap: 10px; height: 45px; padding: 2px 16px 0;
  background: #111417; border-bottom: 2px solid #222b33; font-size: 13px; font-weight: 700;
}
.palette-title .icon { color: var(--blue-text); stroke-width: 1.200; }
.categories { display: flex; flex-wrap: wrap; gap: 8px; padding: 12px; border-bottom: 1px solid var(--line); }
.categories button {
  min-width: 56px; height: 36px; padding: 0 12px; border: 1px solid #28313b; border-radius: 8px;
  background: #1a1d23; color: var(--muted); font-weight: 600;
}
.categories .active, .inspector-tabs .active { background: #182338; border-color: var(--blue); color: var(--blue-text); }
.group-head { display: flex; align-items: center; gap: 8px; padding: 2px 12px 14px; }
.group-head h3 { flex: 1; font-size: 13px; font-weight: 700; }
.group-icon { display: grid; place-items: center; width: 30px; height: 30px; border: 1px solid #21447c; border-radius: 6px; background: #172236; color: var(--blue-text); }
.count { display: grid; place-items: center; width: 26px; height: 24px; border: 1px solid #21447c; border-radius: 12px; background: #172236; color: var(--blue-text); font-size: 11px; font-weight: 700; }
.modules { display: flex; flex-direction: column; gap: 6px; padding: 0 14px 0 12px; }
.modules button {
  display: flex; align-items: center; gap: 13px; width: 100%; height: 68px; padding: 0 11px;
  border: 1px solid #28313b; border-radius: 6px; background: #1a1c23;
  font-weight: 500; line-height: 15px; text-align: left;
}
.thumb { width: 48px; height: 44px; flex: none; }

.center { display: flex; flex-direction: column; flex: 1; min-width: 0; }
.tabs { display: flex; align-items: center; gap: 6px; flex: none; height: 57px; padding: 0 10px; background: #111417; border-bottom: 1px solid var(--line); }
.tabs button { display: flex; align-items: center; gap: 9px; height: 40px; padding: 0 17px 0 18px; border-radius: 8px; color: var(--muted); font-weight: 600; }
.tabs .active { background: var(--blue); color: #fff; font-weight: 700; box-shadow: 0 2px 10px #2f80ed66; }

.canvas { position: relative; flex: 1; min-height: 0; background: linear-gradient(#101115, #0b0c10 10%); }
.drawing { display: block; width: 100%; height: 100%; }
.label-text, .group-text { font-family: "Open Sans", "Noto Sans", sans-serif; font-weight: 700; fill: #fff; text-anchor: middle; }
.label-text { font-size: 11px; }
.group-text { font-size: 12px; }
.tiny-text { font-family: "Liberation Sans", sans-serif; font-size: 7px; fill: #222; }
.micro-text { font-family: "Liberation Sans", sans-serif; font-size: 5px; fill: #333; }
.mark-text { font-family: "Liberation Sans", sans-serif; font-size: 9px; fill: #222; }
.float-tools {
  position: absolute; right: 14px; bottom: 20px; display: flex; flex-direction: column; align-items: center; gap: 6px;
  width: 60px; padding: 8px; border: 1px solid #26282b; border-radius: 8px; background: #18191b; box-shadow: 0 6px 20px #000a;
}
.float-tools button { display: grid; place-items: center; width: 42px; height: 42px; border: 1px solid #2a2b2f; border-radius: 8px; background: #1e1f23; }
.float-tools hr { width: 20px; height: 1px; margin: 4px 0; border: 0; background: #3a3c40; }

.infobar { display: flex; align-items: center; flex: none; height: 28px; padding: 0 10px; background: #161718; border-top: 1px solid var(--line); color: var(--muted); }
.infobar span { display: flex; align-items: center; gap: 6px; height: 18px; padding: 0 10px 0 11px; border-right: 1px solid #272a2e; }
.infobar span:last-child { border: 0; }

.inspector { width: 320px; flex: none; background: var(--panel); border-left: 1px solid var(--line); }
.inspector-tabs { display: grid; grid-template-columns: 1fr 1fr; gap: 8px; padding: 12px 12px 10px; border-bottom: 1px solid var(--line); }
.inspector-tabs button {
  display: flex; align-items: center; justify-content: center; gap: 8px; height: 36px;
  border: 1px solid #28313b; border-radius: 8px; background: #1a1d23; color: var(--muted); font-weight: 600;
}
.inspector-tabs .active { background: #182338; border-color: var(--blue); color: var(--blue-text); box-shadow: 0 6px 16px #2f80ed1f; }
.empty-card { margin: 10px 12px; padding: 10px 12px 11px; border: 1px solid #28313b; border-radius: 8px; background: #1a1c23; }
.pill { display: block; height: 21px; padding: 0 6px; border: 1px solid #303236; border-radius: 11px; background: #202227; color: var(--muted); font-size: 11px; font-weight: 700; line-height: 18px; letter-spacing: 1px; }
.empty-card h3 { margin-top: 10px; font-size: 13px; line-height: 16px; font-weight: 700; }
.empty-card p { margin-top: 9px; color: var(--muted); line-height: 17px; }

.statusbar { display: flex; align-items: center; flex: none; height: 28px; padding: 0 8px; background: #15181c; border-top: 1px solid var(--line); color: #a3a6ad; font-size: 10px; }
.statusbar span { display: flex; align-items: center; gap: 4px; margin-right: 15px; }
.statusbar .file { margin: 0; padding: 0 8px 0 1px; font-weight: 600; border-right: 1px solid #23262b; }
.statusbar .ready { margin-left: 9px; }
.dot { width: 6px; height: 6px; margin-left: 1px; border-radius: 50%; background: #ef4444; }
.statusbar .push { margin-left: auto; }
.statusbar .strong { font-weight: 600; }
.statusbar .last { margin-right: 16px; padding-right: 16px; border-right: 1px solid #23262b; }
.ok { color: #22c58b; }
.blue { color: var(--blue-text); }
.yellow { color: #f0c419; }
.dim { color: #6b6e76; }
.warnings { display: flex; align-items: center; gap: 4px; height: 20px; padding: 0 6px 0 7px; border: 1px solid #8a5f1a; border-radius: 10px; background: #2e2412; color: #f59e0b; font-weight: 700; }
```
